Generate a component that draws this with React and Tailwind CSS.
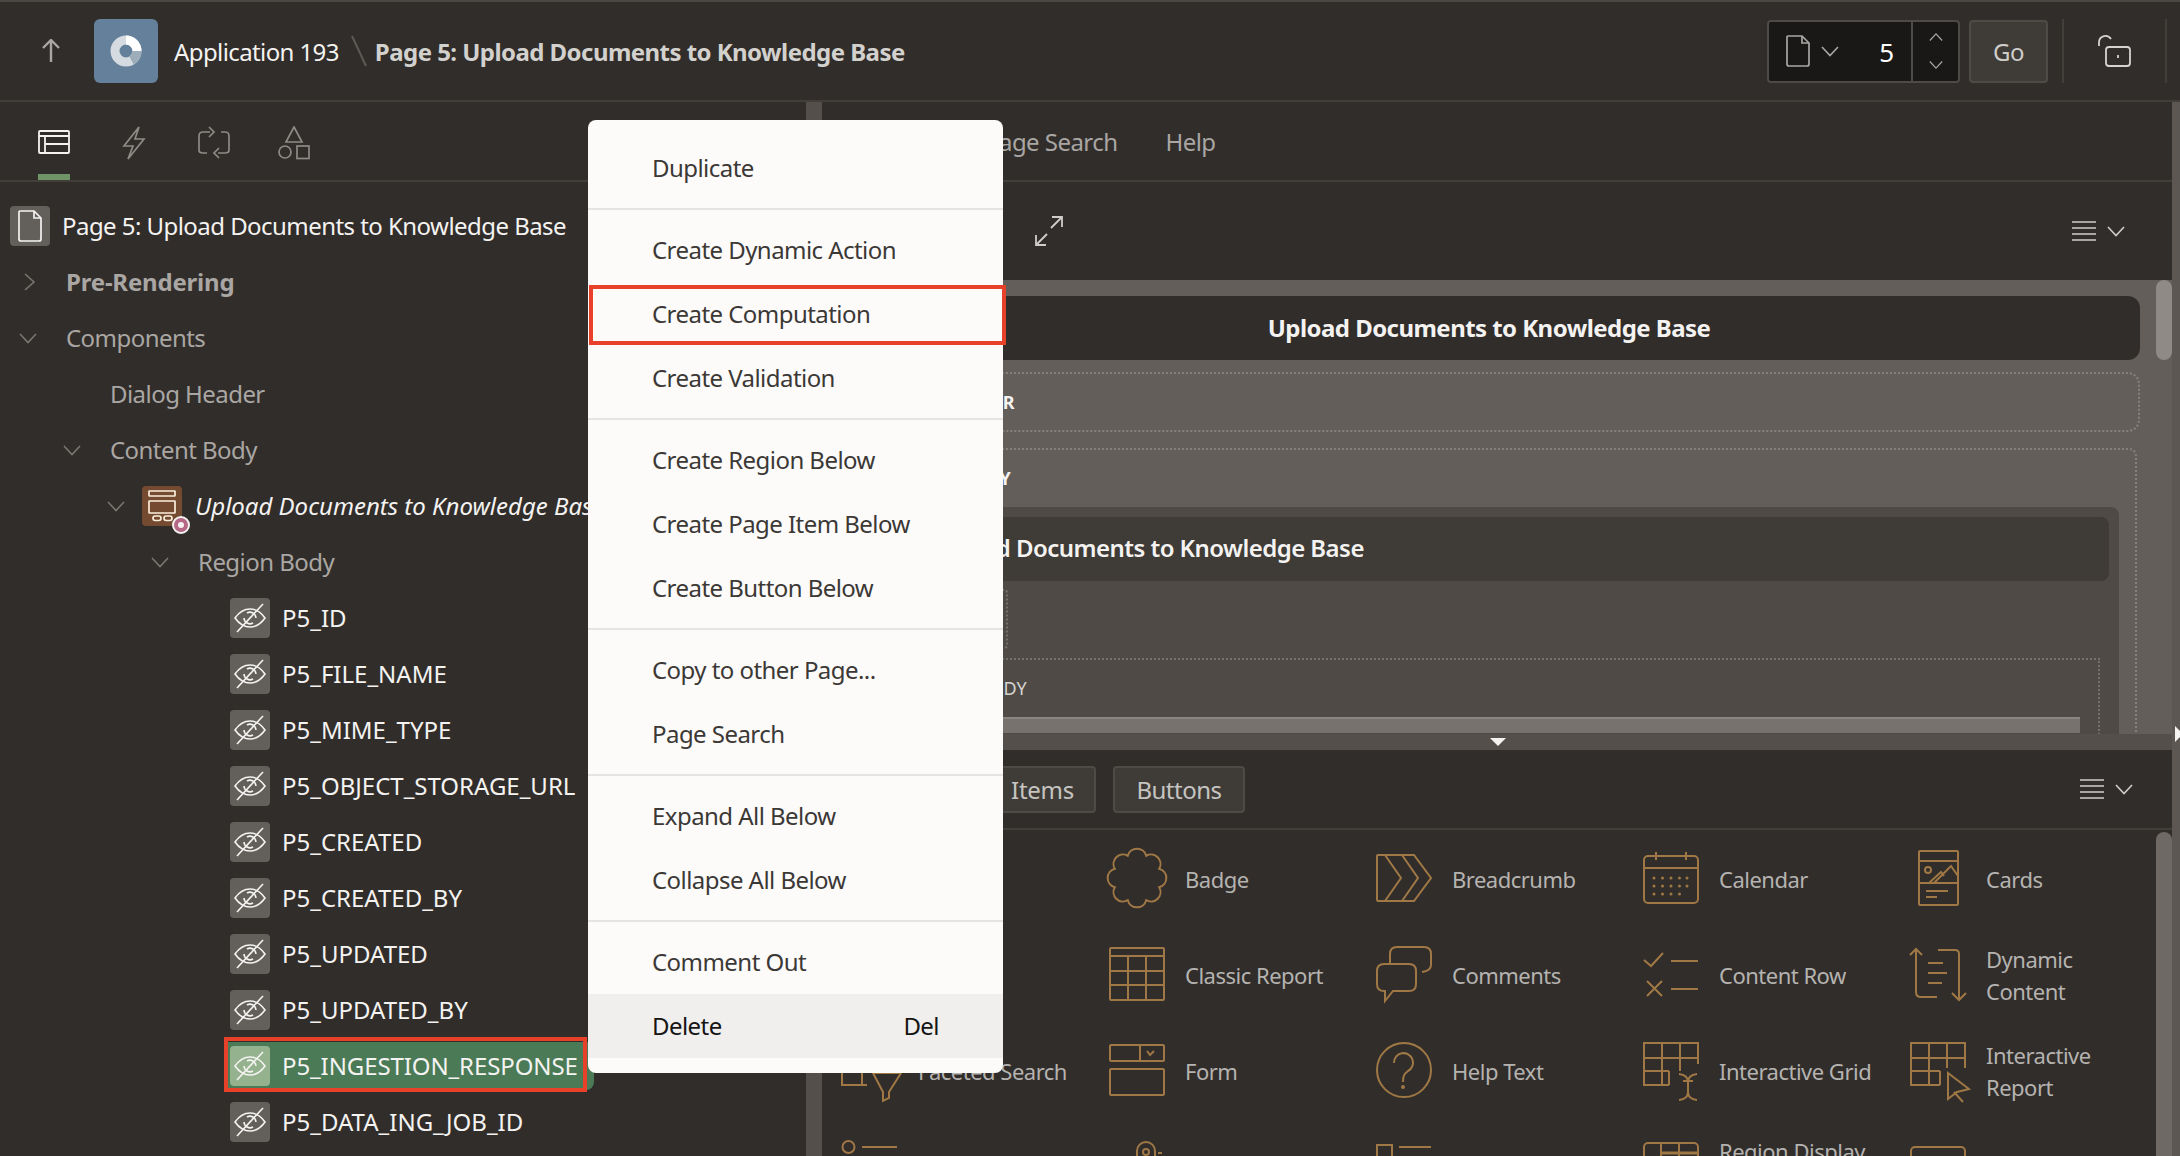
import React from 'react';

const Chevron = ({ dir = 'down', className = '' }) => {
  const d = {
    down: 'M1 2 L9 10.5 L17 2',
    up: 'M1 11 L9 2.5 L17 11',
    right: 'M2 1 L11 9 L2 17',
  }[dir];
  const box = dir === 'right' ? '0 0 14 18' : '0 0 18 13';
  return (
    <svg viewBox={box} fill="none" stroke="currentColor" strokeWidth="1.6" className={className}>
      <path d={d} />
    </svg>
  );
};

const EyeOff = () => (
  <svg width="32" height="32" viewBox="0 0 32 32" fill="none" stroke="#f4f3f1" strokeWidth="1.6">
    <path d="M1 16 C6 9 11 7 16 7 C21 7 26 9 31 16 C26 23 21 25 16 25 C11 25 6 23 1 16 Z" />
    <path d="M13 11 A6 6 0 0 1 22 16 M19 21 A6 6 0 0 1 10 16" />
    <path d="M3 30 L29 2" />
  </svg>
);

const PageIcon = ({ className = '', stroke = 'currentColor' }) => (
  <svg viewBox="0 0 24 32" fill="none" stroke={stroke} strokeWidth="1.7" className={className}>
    <path d="M2 1 H16 L23 8 V29 Q23 31 21 31 H3 Q1 31 1 29 V2 Q1 1 2 1 Z" />
    <path d="M16 1 V8 H23" />
  </svg>
);

const Hamburger = ({ className = '' }) => (
  <svg viewBox="0 0 24 20" stroke="currentColor" strokeWidth="1.7" className={className}>
    <path d="M0 1 H24 M0 7 H24 M0 13 H24 M0 19 H24" />
  </svg>
);

function TreeRow({ pl, chevron, label, labelClass = 'text-[#a9a6a3]', wide = true }) {
  return (
    <div className={`h-14 flex items-center ${pl}`}>
      <div className={`${wide ? 'w-14' : 'w-11'} shrink-0 pl-[9px] text-[#7a7672]`}>
        {chevron === 'right' && <Chevron dir="right" className="ml-[4px] w-[14px] h-[18px]" />}
        {chevron === 'down' && <Chevron className="w-[18px] h-[13px]" />}
      </div>
      <span className={`whitespace-nowrap ${labelClass}`}>{label}</span>
    </div>
  );
}

function ItemRow({ name }) {
  return (
    <div className="h-14 flex items-center pl-[230px]">
      <div className="w-10 h-10 rounded bg-[#63605c] flex items-center justify-center shrink-0">
        <EyeOff />
      </div>
      <span className="ml-3 whitespace-nowrap text-[#f4f3f1] tracking-normal">{name}</span>
    </div>
  );
}

const items = ['P5_ID', 'P5_FILE_NAME', 'P5_MIME_TYPE', 'P5_OBJECT_STORAGE_URL', 'P5_CREATED', 'P5_CREATED_BY', 'P5_UPDATED', 'P5_UPDATED_BY'];

function LeftPanel() {
  return (
    <div className="w-[806px] shrink-0 flex flex-col overflow-hidden text-[24px] leading-[32px] tracking-[-0.55px]">
      <div className="h-[80px] shrink-0 border-b-2 border-[#423e3a] flex pl-[38px] relative">
        <svg width="32" height="24" viewBox="0 0 32 24" fill="none" stroke="#f4f3f1" strokeWidth="1.8" className="mt-[28px]">
          <rect x="1" y="1" width="30" height="22" rx="1" />
          <path d="M1 6 H31 M7 6 V23 M7 14 H31" />
        </svg>
        <svg width="24" height="34" viewBox="0 0 24 34" fill="none" stroke="#8e8a86" strokeWidth="1.7" className="ml-[52px] mt-[24px]">
          <path d="M17 1 L2 20 H11 L6 33 L22 13 H13 Z" />
        </svg>
        <svg width="32" height="34" viewBox="0 0 32 34" fill="none" stroke="#8e8a86" strokeWidth="1.7" className="ml-[52px] mt-[24px]">
          <path d="M12 6 H5 Q1 6 1 10 V24 Q1 27 5 27 H9 M20 27 H27 Q31 27 31 24 V10 Q31 6 27 6 H23" />
          <path d="M11 1 L16 6 L11 11 M21 22 L16 27 L21 32" />
        </svg>
        <svg width="32" height="34" viewBox="0 0 32 34" fill="none" stroke="#8e8a86" strokeWidth="1.7" className="ml-[48px] mt-[24px]">
          <path d="M16 1 L24 16 H8 Z" />
          <circle cx="7" cy="26" r="6" />
          <rect x="19" y="20" width="12" height="12.5" />
        </svg>
        <div className="absolute left-[38px] bottom-0 w-8 h-[6px] bg-[#6f9468]" />
      </div>

      <div className="pt-4 flex-1">
        <div className="h-14 flex items-center pl-[10px]">
          <div className="w-10 h-10 rounded bg-[#63605c] flex items-center justify-center shrink-0">
            <PageIcon className="w-6 h-8" stroke="#f4f3f1" />
          </div>
          <span className="ml-3 whitespace-nowrap text-[#f4f3f1]">Page 5: Upload Documents to Knowledge Base</span>
        </div>
        <TreeRow pl="pl-[10px]" chevron="right" label="Pre-Rendering" labelClass="font-bold tracking-[-0.2px] text-[#a9a6a3]" />
        <TreeRow pl="pl-[10px]" chevron="down" label="Components" />
        <TreeRow pl="pl-[54px]" label="Dialog Header" />
        <TreeRow pl="pl-[54px]" chevron="down" label="Content Body" />
        <div className="h-14 flex items-center pl-[98px]">
          <div className="w-11 shrink-0 pl-[9px] text-[#7a7672]">
            <Chevron className="w-[18px] h-[13px]" />
          </div>
          <div className="w-10 h-10 rounded bg-[#744a31] flex items-center justify-center shrink-0 relative">
            <svg width="30" height="32" viewBox="0 0 30 32" fill="none" stroke="#fbeedd" strokeWidth="1.7">
              <rect x="2" y="1" width="26" height="5" rx="0.5" />
              <rect x="2" y="11" width="26" height="12" rx="0.5" />
              <rect x="6" y="26" width="8" height="4.5" rx="2.2" />
              <rect x="17" y="26" width="8" height="4.5" rx="2.2" />
            </svg>
            <div className="absolute -right-[8px] -bottom-[8px] w-[18px] h-[18px] rounded-full bg-[#b56785] border-2 border-[#f4f3f1] flex items-center justify-center">
              <div className="w-[6px] h-[6px] rounded-full bg-[#f4f3f1]" />
            </div>
          </div>
          <span className="ml-[13px] whitespace-nowrap italic text-[#f4f3f1] tracking-normal">Upload Documents to Knowledge Base</span>
        </div>
        <TreeRow pl="pl-[142px]" chevron="down" label="Region Body" />
        {items.map((n) => (
          <ItemRow key={n} name={n} />
        ))}
        <div className="h-14 flex items-center pl-[228px] relative">
          <div className="w-[366px] h-12 pl-[2px] flex items-center bg-[#4a7a56] rounded-r-lg">
            <div className="w-10 h-10 rounded bg-[#94b28e] flex items-center justify-center shrink-0">
              <EyeOff />
            </div>
            <span className="ml-3 whitespace-nowrap text-[#f4f3f1] tracking-[-0.1px]">P5_INGESTION_RESPONSE</span>
          </div>
          <div className="absolute left-[224px] -top-[1px] w-[363px] h-[55px] border-4 border-[#e8412a]" />
        </div>
        <ItemRow name="P5_DATA_ING_JOB_ID" />
      </div>
    </div>
  );
}

function Preview() {
  return (
    <div className="h-[454px] shrink-0 bg-[#635e59] pl-4 pr-8 pt-4 overflow-hidden relative text-[#f4f3f1]">
      <div className="absolute right-0 top-0 w-4 h-20 rounded-full bg-[#8f8a86]" />
      <div className="h-16 rounded-xl bg-[#312d2a] flex items-center justify-center text-[24px] font-bold tracking-[-0.55px]">
        Upload Documents to Knowledge Base
      </div>
      <div className="mt-3 h-[60px] rounded-xl border-2 border-dotted border-[#85807b] flex items-center text-[18px] font-bold">
        <span className="ml-[29px]">DIALOG HEADER</span>
      </div>
      <div className="mt-4 mr-[3px] h-[320px] rounded-t-lg border-t-2 border-r-2 border-l-2 border-dotted border-[#85807b] text-[18px]">
        <div className="h-[57px] flex items-center font-bold pl-[30px]">CONTENT BODY</div>
        <div className="mr-[16px] h-[260px] bg-[#4f4a46] rounded-t-lg px-[10px] pt-[10px]">
          <div className="h-16 rounded-lg bg-[#3f3b37] flex items-center pl-[80px] pb-[2px] text-[24px] font-semibold tracking-[-0.55px]">
            Upload Documents to Knowledge Base
          </div>
          <div className="mt-2 w-[158px] h-[60px] rounded border-2 border-dotted border-[#74706b]" />
          <div className="mt-[9px] mr-[9px] h-[120px] border-t-2 border-r-2 border-dotted border-[#74706b]">
            <div className="h-[57px] flex items-center pl-[55px] text-[#d6d4d1]">REGION BODY</div>
            <div className="mr-[18px] h-4 bg-[#77726d] border-t-2 border-[#8a8580]" />
          </div>
        </div>
      </div>
    </div>
  );
}

const S = { fill: 'none', stroke: '#9f7845', strokeWidth: 2 };

const Flower = () => {
  const pts = Array.from({ length: 8 }, (_, i) => {
    const a = ((i + 0.5) * Math.PI) / 4;
    return [28 + 24 * Math.cos(a), 28 + 24 * Math.sin(a)];
  });
  const d = pts.map((p, i) => `${i === 0 ? 'M' : 'A9.5 9.5 0 0 1'} ${p[0].toFixed(1)} ${p[1].toFixed(1)}`).join(' ') + ' A9.5 9.5 0 0 1 ' + pts[0][0].toFixed(1) + ' ' + pts[0][1].toFixed(1) + ' Z';
  return <path d={d} />;
};

const icons = {
  blank: null,
  badge: <Flower />,
  breadcrumb: (
    <>
      <path d="M2 5 H38 L55 28 L38 51 H2 Q1 51 1 49 V6 Q1 5 2 5 Z" />
      <path d="M9 5 L25 28 L9 51 M26 5 L42 28 L26 51" />
    </>
  ),
  calendar: (
    <>
      <rect x="1" y="6" width="54" height="47" rx="4" />
      <path d="M1 18 H55 M13 2 V10 M43 2 V10" />
      <g fill="#9f7845" stroke="none">
        {[11, 19.5, 28, 36.5, 44].map((x) =>
          [28, 36, 44].map((y) => (x === 44 && y === 44 ? null : <circle key={`${x}-${y}`} cx={x} cy={y} r="1.5" />))
        )}
      </g>
    </>
  ),
  cards: (
    <>
      <rect x="9" y="1" width="39" height="54" rx="1" />
      <path d="M9 11 H48 M9 33 H48 M16 41 H38 M16 47 H27" />
      <circle cx="18" cy="20" r="3" />
      <path d="M19 33 L31 22 L34 26 M24 33 L41 16 L48 26" />
    </>
  ),
  report: (
    <>
      <rect x="1" y="2" width="54" height="52" rx="1" />
      <path d="M1 10 H55 M1 25 H55 M1 39 H55 M19 10 V54 M37 10 V54" />
    </>
  ),
  comments: (
    <>
      <path d="M14 18 V8 Q14 1 21 1 H48 Q55 1 55 8 V19 Q55 25 46 26" />
      <path d="M8 18 H33 Q40 18 40 25 V38 Q40 45 33 45 H17 L9 55 V45 H8 Q1 45 1 38 V25 Q1 18 8 18 Z" />
    </>
  ),
  contentRow: <path d="M1 14 L8 20 L20 7 M28 15 H55 M28 43 H55 M4 35 L19 50 M19 35 L4 50" />,
  dynamic: (
    <>
      <path d="M0 9 L6 3 L12 9 M6 3 V46 Q6 51 11 51 H27 M28 4 H45 Q49 4 49 8 V53 M42 47 L49 54 L56 47" />
      <path d="M18 17 H33 M18 27 H37 M18 37 H32" />
    </>
  ),
  faceted: (
    <>
      <path d="M0 25 V43 H25 M20 25 V43" />
      <path d="M31 31 H59 L47 50 V56 L41 59 V50 Z" />
    </>
  ),
  form: (
    <>
      <rect x="1" y="3" width="54" height="16" rx="1" />
      <rect x="1" y="27" width="54" height="26" rx="1" />
      <path d="M31 3 V19 M38 9 L41 13 L45 9" />
    </>
  ),
  help: (
    <>
      <circle cx="28" cy="28" r="27" />
      <path d="M18 21 A9.5 9.5 0 1 1 32 29 C28 32 27 34 27 40" />
      <circle cx="27" cy="45" r="1" fill="#9f7845" />
    </>
  ),
  grid: (
    <>
      <path d="M26 43 H1 V1 H55 V22 M1 16 H55 M1 29 H26 M19 1 V43 M37 1 V29 M26 29 V43" />
      <path d="M36 32 Q45 33 45 40 Q45 33 54 32 M45 40 V50 M40 39 H50 M36 58 Q45 57 45 50 Q45 57 54 58" />
    </>
  ),
  ir: (
    <>
      <path d="M30 43 H1 V1 H55 V26 M1 16 H55 M1 29 H30 M19 1 V43 M37 1 V26 M30 29 V43" />
      <path d="M38 31 L59 47 L47 50 L38 57 Z M44 50 L53 60" />
    </>
  ),
  listView: (
    <>
      <circle cx="6.5" cy="9" r="6" />
      <path d="M20 9 H55" />
    </>
  ),
  map: (
    <>
      <path d="M28 40 V13 A9 9 0 0 1 46 13 V40" />
      <circle cx="37" cy="14" r="3" />
      <path d="M49 15 H53" />
    </>
  ),
  mediaList: (
    <>
      <rect x="1" y="7" width="15" height="30" />
      <path d="M23 9 H55" />
    </>
  ),
  rds: (
    <>
      <rect x="1" y="5" width="54" height="40" rx="4" />
      <path d="M18 5 V25 M36 5 V25" />
      <path d="M18 15 H55" strokeWidth="3" />
    </>
  ),
  reflow: <rect x="1" y="9" width="54" height="40" rx="4" />,
};

const gallery = [
  ['Alert', 'blank'], ['Badge', 'badge'], ['Breadcrumb', 'breadcrumb'], ['Calendar', 'calendar'], ['Cards', 'cards'],
  ['Chart', 'blank'], ['Classic Report', 'report'], ['Comments', 'comments'], ['Content Row', 'contentRow'], ['Dynamic Content', 'dynamic'],
  ['Faceted Search', 'faceted'], ['Form', 'form'], ['Help Text', 'help'], ['Interactive Grid', 'grid'], ['Interactive Report', 'ir'],
  ['', 'listView'], ['', 'map'], ['', 'mediaList'], ['Region Display Selector', 'rds'], [' ', 'reflow'],
];

function Gallery() {
  return (
    <div className="flex-1 min-h-0 relative overflow-hidden">
      <div className="absolute right-0 top-[2px] bottom-0 w-4 rounded-t-full bg-[#6e6965]" />
      <div className="grid grid-cols-[repeat(5,267px)] auto-rows-[96px] pl-5 text-[22px] leading-[32px] tracking-[-0.5px] text-[#b5b3b0]">
        {gallery.map(([label, icon]) => (
          <div key={icon + label} className="flex items-center">
            <svg width="56" height="56" viewBox="0 0 56 56" {...S} className="shrink-0 overflow-visible">
              {icons[icon]}
            </svg>
            <span className={`ml-[20px] pt-[2px] ${label.length > 16 || label === 'Dynamic Content' || label === 'Interactive Report' ? 'w-[150px]' : 'whitespace-nowrap'}`}>{label}</span>
          </div>
        ))}
      </div>
    </div>
  );
}

function RightPanel() {
  return (
    <div className="w-[1350px] shrink-0 flex flex-col text-[24px]">
      <div className="h-[80px] shrink-0 border-b-2 border-[#423e3a] flex items-center pl-[23px] pt-[2px] gap-[48px] text-[#a9a6a3] tracking-[-0.55px]">
        <span className="w-[92px]">Layout</span>
        <span>Page Search</span>
        <span>Help</span>
      </div>
      <div className="h-[98px] shrink-0 flex items-center justify-between pl-[213px] pr-[47px] text-[#cfcdca]">
        <svg width="28" height="30" viewBox="0 0 28 30" fill="none" stroke="currentColor" strokeWidth="1.8">
          <path d="M16 12 L27 1 M17 1 H27 V11 M12 18 L1 29 M1 19 V29 H11" />
        </svg>
        <div className="flex items-center gap-[11px]">
          <Hamburger className="w-6 h-5" />
          <Chevron className="w-[18px] h-[13px]" />
        </div>
      </div>
      <Preview />
      <div className="h-4 shrink-0 bg-[#544f4b] flex justify-center relative">
        <div className="ml-[1px] mt-[4px] w-0 h-0 border-l-[8px] border-r-[8px] border-t-[8px] border-l-transparent border-r-transparent border-t-[#f4f3f1]" />
      </div>
      <div className="h-[80px] shrink-0 border-b-2 border-[#423e3a] flex items-center justify-between pl-[20px] pr-[39px]">
        <div className="flex items-center gap-[17px] text-[#c6c4c1]">
          <div className="w-[128px] h-[47px] rounded bg-[#4a4642] flex items-center justify-center">Regions</div>
          <div className="w-[109px] h-[47px] pt-[2px] pl-[2px] rounded border-2 border-[#4e4a46] bg-[#3f3c38] flex items-center justify-center tracking-[-0.3px]">Items</div>
          <div className="w-[132px] h-[47px] pt-[2px] rounded border-2 border-[#4e4a46] bg-[#3f3c38] flex items-center justify-center tracking-[-0.5px]">Buttons</div>
        </div>
        <div className="flex items-center gap-[11px] text-[#cfcdca]">
          <Hamburger className="w-6 h-5" />
          <Chevron className="w-[18px] h-[13px]" />
        </div>
      </div>
      <Gallery />
    </div>
  );
}

const menu = [
  ['Duplicate'],
  ['Create Dynamic Action', 'Create Computation', 'Create Validation'],
  ['Create Region Below', 'Create Page Item Below', 'Create Button Below'],
  ['Copy to other Page...', 'Page Search'],
  ['Expand All Below', 'Collapse All Below'],
  ['Comment Out', 'Delete'],
];

function ContextMenu() {
  return (
    <div className="absolute left-[588px] top-[120px] w-[415px] h-[953px] rounded-lg bg-[#fcfbfa] py-4 text-[24px] tracking-[-0.55px] text-[#3b3835]">
      {menu.map((group, i) => (
        <div key={group[0]}>
          {i > 0 && (
            <div className="h-[18px] flex items-center">
              <div className="w-full h-[2px] bg-[#e6e4e2]" />
            </div>
          )}
          {group.map((label) => (
            <div key={label} className={`h-16 flex items-center justify-between pl-[64px] pr-[64px] ${label === 'Delete' ? 'bg-[#f0efee] text-[#161513]' : ''}`}>
              <span>{label}</span>
              {label === 'Delete' && <span>Del</span>}
            </div>
          ))}
        </div>
      ))}
      <div className="absolute left-[1px] top-[165px] w-[417px] h-[60px] border-4 border-[#e8412a]" />
    </div>
  );
}

function TopBar() {
  return (
    <div className="h-[102px] shrink-0 border-t-2 border-t-[#4a4642] border-b-2 border-b-[#423e3a] flex items-center pl-[42px] text-[24px] tracking-[-0.55px]">
      <svg width="18" height="24" viewBox="0 0 18 24" fill="none" stroke="#a9a6a3" strokeWidth="2.4">
        <path d="M1 9 L9 1 L17 9 M9 1 V23" />
      </svg>
      <div className="ml-[34px] w-16 h-16 rounded-md bg-[#64809a] flex items-center justify-center">
        <svg width="32" height="32" viewBox="0 0 32 32">
          <circle cx="16" cy="16" r="11" fill="none" stroke="#d5dbe0" strokeWidth="9" />
          <path d="M16 5 A11 11 0 0 1 27 16" fill="none" stroke="#ffffff" strokeWidth="9" />
          <path d="M27 16 A11 11 0 0 1 21.5 25.5" fill="none" stroke="#9eadba" strokeWidth="9" />
        </svg>
      </div>
      <span className="ml-4 pt-[2px] text-[#f4f3f1] tracking-[-0.6px]">Application 193</span>
      <svg width="16" height="32" viewBox="0 0 16 32" stroke="#5d5955" strokeWidth="2" className="ml-[12px]">
        <path d="M1 1 L15 31" />
      </svg>
      <span className="ml-[8px] pt-[2px] font-bold text-[#d3d1ce]">Page 5: Upload Documents to Knowledge Base</span>

      <div className="ml-auto flex items-center">
        <div className="w-[193px] h-[63px] rounded border-2 border-[#4e4a46] bg-[#191817] flex">
          <div className="flex-1 flex items-center pl-[17px]">
            <PageIcon className="w-6 h-8 text-[#a9a6a3]" />
            <Chevron className="ml-[11px] w-[18px] h-[13px] text-[#a9a6a3]" />
            <span className="ml-auto mr-[17px] pt-[2px] text-[26px] text-[#ffffff] tracking-normal">5</span>
          </div>
          <div className="w-[47px] border-l-2 border-[#4e4a46] flex flex-col items-center justify-center gap-[18px] text-[#a9a6a3]">
            <Chevron dir="up" className="w-[14px] h-[10px]" />
            <Chevron className="w-[14px] h-[10px]" />
          </div>
        </div>
        <div className="ml-[9px] w-[79px] h-[63px] pt-[2px] rounded border-2 border-[#4e4a46] bg-[#3f3c38] text-[#cfcdca] flex items-center justify-center">Go</div>
        <div className="ml-[14px] w-[2px] h-[64px] bg-[#423e3a]" />
        <svg width="34" height="34" viewBox="0 0 34 34" fill="none" stroke="#d6d4d1" strokeWidth="1.8" className="ml-[34px]">
          <path d="M1 12 V8 A6.5 6.5 0 0 1 13 5" />
          <rect x="8" y="13" width="24" height="19" rx="3" />
          <path d="M20 21 V24" />
        </svg>
        <div className="ml-[33px] mr-[13px] w-[2px] h-[64px] bg-[#423e3a]" />
      </div>
    </div>
  );
}

export default function App() {
  return (
    <div className="w-[2180px] h-[1156px] relative overflow-hidden bg-[#312d2a] [font-family:'Noto_Sans',sans-serif]">
      <TopBar />
      <div className="flex h-[1054px]">
        <LeftPanel />
        <div className="w-4 shrink-0 bg-[#544f4b]" />
        <RightPanel />
        <div className="w-2 shrink-0 bg-[#5c5752] relative">
          <div className="absolute left-[3px] top-[624px] w-0 h-0 border-t-[8px] border-b-[8px] border-l-[8px] border-t-transparent border-b-transparent border-l-[#f4f3f1]" />
        </div>
      </div>
      <ContextMenu />
    </div>
  );
}
